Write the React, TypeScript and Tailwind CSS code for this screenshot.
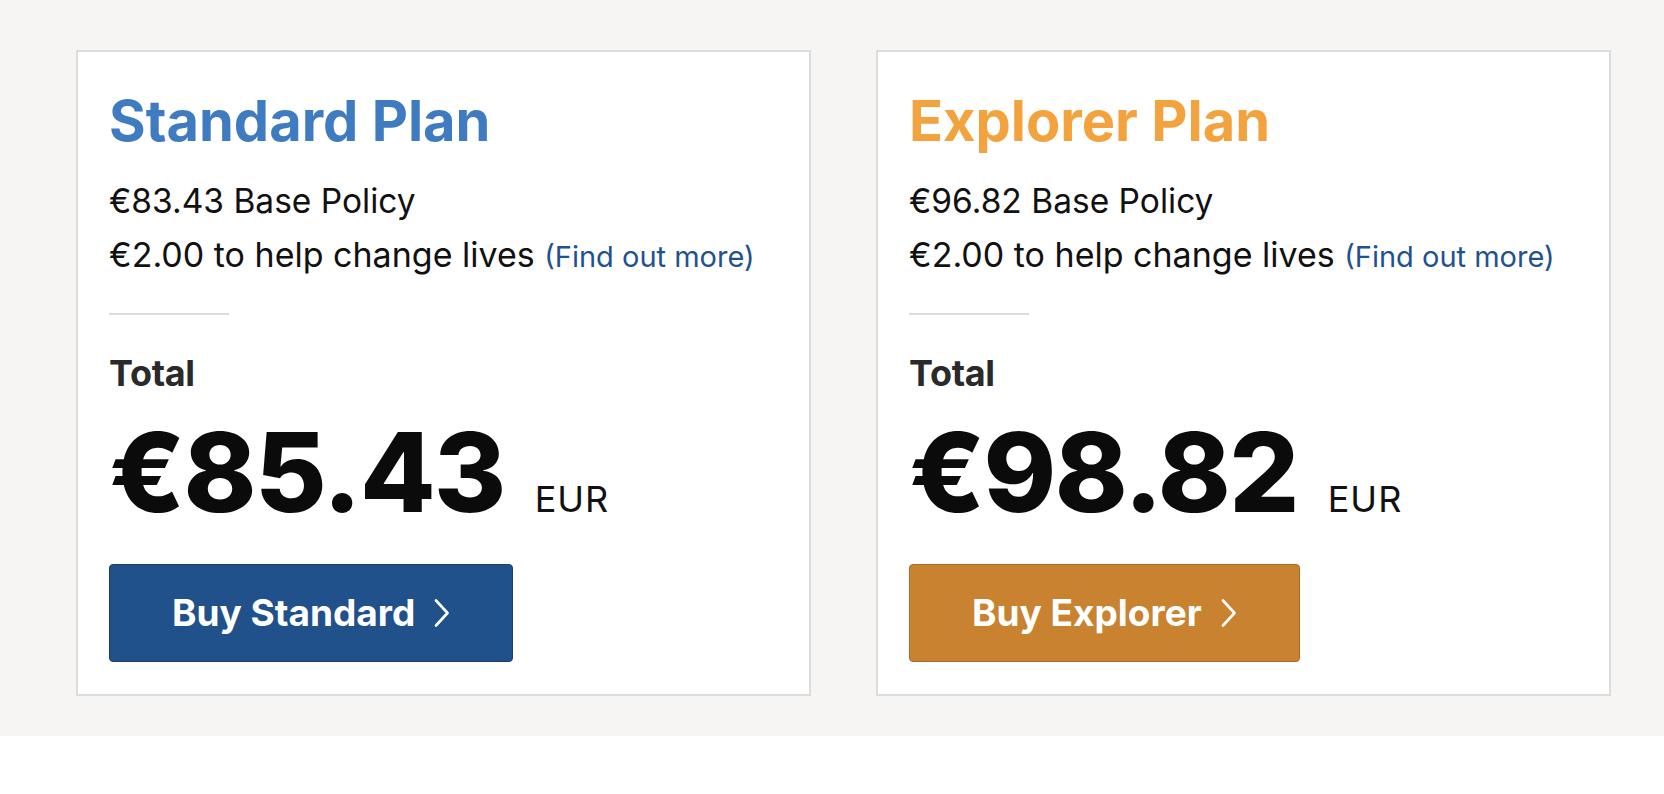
import React from "react";

type Plan = {
  name: string;
  base: string;
  total: string;
  button: string;
  headingClass: string;
  buttonClass: string;
};

const plans: Plan[] = [
  {
    name: "Standard Plan",
    base: "€83.43",
    total: "€85.43",
    button: "Buy Standard",
    headingClass: "text-[#3e7bc1]",
    buttonClass: "bg-[#21518a] border-[#1a3f6c]",
  },
  {
    name: "Explorer Plan",
    base: "€96.82",
    total: "€98.82",
    button: "Buy Explorer",
    headingClass: "text-[#f3a33d]",
    buttonClass: "bg-[#c9822f] border-[#a96a27]",
  },
];

function Chevron() {
  return (
    <svg width="16" height="28" viewBox="0 0 16 28" fill="none" className="ml-[19px]">
      <path d="M2 1.5 L13.5 14 L2 26.5" stroke="white" strokeWidth="2.6" strokeLinecap="round" strokeLinejoin="round" />
    </svg>
  );
}

function Card({ plan }: { plan: Plan }) {
  return (
    <div className="w-[735px] bg-white border-2 border-[#dcdcdc] pl-[31px] pt-[37px] pb-[32px]">
      <h2 className={`text-[56px] leading-[64px] font-bold ${plan.headingClass}`}>{plan.name}</h2>
      <p className="mt-[21px] text-[33.5px] leading-[54px] text-[#111111]">{plan.base} Base Policy</p>
      <p className="text-[34px] leading-[54px] text-[#111111]">
        €2.00 to help change lives{" "}
        <a className="text-[29px] text-[#22528e]">(Find out more)</a>
      </p>
      <div className="mt-[29px] h-[2px] w-[120px] bg-[#dddddd]" />
      <p className="mt-[36px] text-[36px] leading-[44px] font-bold text-[#2a2a2a] tracking-[-0.3px]">Total</p>
      <div className="mt-[22px] flex items-baseline">
        <span className="text-[110px] leading-[110px] font-extrabold text-[#0b0b0b] tracking-[-1.6px]">{plan.total}</span>
        <span className="ml-[30px] text-[36px] text-[#111111] tracking-[1px]">EUR</span>
      </div>
      <div className="mt-[37px] flex">
        <button
          className={`inline-flex h-[98px] items-center rounded-[4px] border px-[62px] text-[37px] font-bold text-white ${plan.buttonClass}`}
        >
          {plan.button}
          <Chevron />
        </button>
      </div>
    </div>
  );
}

export default function App() {
  return (
    <div className="min-h-[794px] bg-white font-['Inter','Noto_Sans',sans-serif]">
      <div className="h-[736px] bg-[#f6f5f4] pt-[50px] pl-[76px]">
        <div className="flex gap-[65px] items-start">
          {plans.map((p) => (
            <Card key={p.name} plan={p} />
          ))}
        </div>
      </div>
    </div>
  );
}
